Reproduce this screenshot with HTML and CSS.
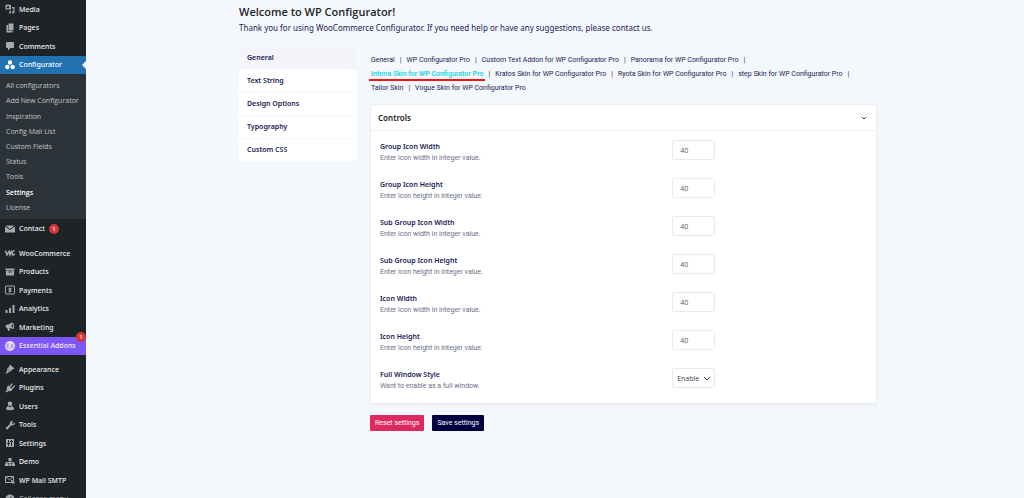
FILE: index.html
```
<!DOCTYPE html>
<html lang="en">
<head>
    <meta charset="UTF-8">
    <meta name="viewport" content="width=device-width, initial-scale=1.0">
    <title>WP Configurator Settings</title>
    <link rel="stylesheet" href="styles.css">
</head>
<body>
    <nav class="sidebar">
        <ul class="menu menu-top">
            <li><a href="#">
                <svg class="icon" viewBox="0 0 20 20"><path fill-rule="evenodd" d="M1 2h2l1-1h4l1 1h3v9H1zM6 4a2.500 2.500 0 1 0 0 5 2.500 2.500 0 0 0 0-5zM14 6h5v10.500a2.500 2.500 0 1 1-2-2.400V9h-3zM10 13h2v4a2 2 0 1 1-2-2z"/></svg>
                Media</a></li>
            <li><a href="#">
                <svg class="icon" viewBox="0 0 20 20"><path d="M7 1h10v14H7zM3 4h3v12h9v3H3z"/></svg>
                Pages</a></li>
            <li><a href="#">
                <svg class="icon" viewBox="0 0 20 20"><path d="M4 2h12a2 2 0 0 1 2 2v8a2 2 0 0 1-2 2h-5l-5 5v-5H4a2 2 0 0 1-2-2V4a2 2 0 0 1 2-2z"/></svg>
                Comments</a></li>
            <li><a href="#" class="current">
                <svg class="icon" viewBox="0 0 20 20"><circle cx="10" cy="5" r="4.400"/><circle cx="4.600" cy="14" r="4.400"/><circle cx="15.400" cy="14" r="4.400"/></svg>
                Configurator</a></li>
        </ul>
        <ul class="submenu">
            <li><a href="#">All configurators</a></li>
            <li><a href="#">Add New Configurator</a></li>
            <li><a href="#">Inspiration</a></li>
            <li><a href="#">Config Mail List</a></li>
            <li><a href="#">Custom Fields</a></li>
            <li><a href="#">Status</a></li>
            <li><a href="#">Tools</a></li>
            <li><a href="#" class="selected">Settings</a></li>
            <li><a href="#">License</a></li>
        </ul>
        <ul class="menu menu-contact">
            <li><a href="#">
                <svg class="icon" viewBox="0 0 20 20"><path d="M1 3h18l-9 7zM0 5l10 7 10-7v12H0z"/></svg>
                Contact <span class="count">1</span></a></li>
        </ul>
        <ul class="menu menu-shop">
            <li><a href="#">
                <svg class="icon" viewBox="0 0 20 20"><path d="M1 5l3 9 4-7 2 7 3-9M19 5c-5 0-6 9-3 9 2 0 3-2 3-3" fill="none" stroke="currentColor" stroke-width="3"/></svg>
                WooCommerce</a></li>
            <li><a href="#">
                <svg class="icon" viewBox="0 0 20 20"><path fill-rule="evenodd" d="M1 3h18v4H1zM2 8h16v9H2zM7 9v2h6V9z"/></svg>
                Products</a></li>
            <li><a href="#">
                <svg class="icon" viewBox="0 0 20 20"><rect x="1" y="2" width="18" height="16" rx="1" fill="none" stroke="currentColor" stroke-width="2"/><path d="M13 7H8v3h4v3H7M10 5v10" fill="none" stroke="currentColor" stroke-width="2"/></svg>
                Payments</a></li>
            <li><a href="#">
                <svg class="icon" viewBox="0 0 20 20"><path d="M1 12h4v6H1zM8 8h4v10H8zM15 2h4v16h-4z"/></svg>
                Analytics</a></li>
            <li><a href="#">
                <svg class="icon" viewBox="0 0 20 20"><path fill-rule="evenodd" d="M14 1c4 1 6 9 3 13-3 0-5-2-8-2l1 5-3 1-3-6c-3-1-4-4-2-6 5-1 8-3 12-5zM14 4c-2 2 0 7 2 8 1-3 0-7-2-8z"/></svg>
                Marketing</a></li>
            <li><a href="#" class="addons">
                <svg class="icon" viewBox="0 0 20 20"><circle cx="10" cy="10" r="10"/><path d="M9 6H4v8h5M4 10h4M11 15l3-9 3 9M12 12h4" fill="none" stroke="#7c57f5" stroke-width="1"/></svg>
                Essential Addons <span class="count count-corner">1</span></a></li>
        </ul>
        <ul class="menu menu-admin">
            <li><a href="#">
                <svg class="icon" viewBox="0 0 20 20"><path d="M10 1l9 8-4 2-4 4-7-6 4-3zM4 10l6 5-6 4-3-1 3-4z"/></svg>
                Appearance</a></li>
            <li><a href="#">
                <svg class="icon" viewBox="0 0 20 20"><path d="M7 5l8 8c-3 4-6 4-8 3l-4 3-2-2 3-4C3 10 4 7 7 5z"/><path d="M10 7l4-5M14 11l5-5" stroke="currentColor" stroke-width="2.500" stroke-linecap="round"/></svg>
                Plugins</a></li>
            <li><a href="#">
                <svg class="icon" viewBox="0 0 20 20"><circle cx="10" cy="5.500" r="4.500"/><path d="M7 10l3 3 3-3c3 1 5 3 5 7-5 2-11 2-16 0 0-4 2-6 5-7z"/></svg>
                Users</a></li>
            <li><a href="#">
                <svg class="icon" viewBox="0 0 20 20"><path d="M17.700 9.300c-1.400 1.300-3.300 1.700-5 1l-7 7.800c-.8.900-2.400 1-3.400 0-1-.8-.9-2.400.1-3.300l7.600-7c-.6-1.700-.2-3.600 1.100-5C12.600 1.300 15 .9 16.800 1.600l-3 3.400.5 2.200 2.300.5 3-3c.6 1.600.1 3.300-1.900 4.600z"/></svg>
                Tools</a></li>
            <li><a href="#">
                <svg class="icon" viewBox="0 0 20 20"><path fill-rule="evenodd" d="M2 2h16v16H2zM6 4v6H4v2h2v4h2v-4h2v-2H8V4zM12 4v2h-2v2h2v8h2V8h2V6h-2V4z"/></svg>
                Settings</a></li>
            <li><a href="#">
                <svg class="icon" viewBox="0 0 20 20"><path d="M7 2h6v6h-2v2h7v3h2v5h-6v-5h2v-1h-5v1h2v5H7v-5h2v-1H4v1h2v5H0v-5h2v-3h7V8H7z"/></svg>
                Demo</a></li>
            <li><a href="#">
                <svg class="icon" viewBox="0 0 20 20"><path d="M1 3h16v8h-4v4H1zM2 4l7 6 7-6" fill="none" stroke="currentColor" stroke-width="2"/><path d="M10 14h5v-3l5 4-5 4v-3h-5z"/></svg>
                WP Mail SMTP</a></li>
            <li><a href="#" class="collapse">
                <svg class="icon" viewBox="0 0 20 20"><path fill-rule="evenodd" d="M10 1a9 9 0 1 0 0 18 9 9 0 0 0 0-18zM13 5v10l-7-5z"/></svg>
                Collapse menu</a></li>
        </ul>
    </nav>

    <main class="content">
        <h1>Welcome to WP Configurator!</h1>
        <p class="intro">Thank you for using WooCommerce Configurator. If you need help or have any suggestions, please contact us.</p>

        <div class="settings">
            <nav class="tabs">
                <a href="#" class="active">General</a>
                <a href="#">Text String</a>
                <a href="#">Design Options</a>
                <a href="#">Typography</a>
                <a href="#">Custom CSS</a>
            </nav>

            <form class="panel">
                <ul class="sections">
                    <li><a href="#">General</a></li>
                    <li><a href="#">WP Configurator Pro</a></li>
                    <li><a href="#">Custom Text Addon for WP Configurator Pro</a></li>
                    <li><a href="#">Panorama for WP Configurator Pro</a></li>
                    <li><a href="#" class="active">Interia Skin for WP Configurator Pro</a></li>
                    <li><a href="#">Kratos Skin for WP Configurator Pro</a></li>
                    <li><a href="#">Ryota Skin for WP Configurator Pro</a></li>
                    <li><a href="#">step Skin for WP Configurator Pro</a></li>
                    <li><a href="#">Tailor Skin</a></li>
                    <li><a href="#">Vogue Skin for WP Configurator Pro</a></li>
                </ul>

                <section class="card">
                    <header class="card-header">
                        <h2>Controls</h2>
                        <button type="button" class="toggle" aria-label="Toggle controls">
                            <svg viewBox="0 0 8 8"><path d="M2 3l2 2 2-2"/></svg>
                        </button>
                    </header>
                    <div class="fields">
                        <div class="field">
                            <div class="field-text">
                                <label for="group-width">Group Icon Width</label>
                                <p>Enter icon width in integer value.</p>
                            </div>
                            <input type="text" id="group-width" value="40">
                        </div>
                        <div class="field">
                            <div class="field-text">
                                <label for="group-height">Group Icon Height</label>
                                <p>Enter icon height in integer value.</p>
                            </div>
                            <input type="text" id="group-height" value="40">
                        </div>
                        <div class="field">
                            <div class="field-text">
                                <label for="sub-width">Sub Group Icon Width</label>
                                <p>Enter icon width in integer value.</p>
                            </div>
                            <input type="text" id="sub-width" value="40">
                        </div>
                        <div class="field">
                            <div class="field-text">
                                <label for="sub-height">Sub Group Icon Height</label>
                                <p>Enter icon height in integer value.</p>
                            </div>
                            <input type="text" id="sub-height" value="40">
                        </div>
                        <div class="field">
                            <div class="field-text">
                                <label for="icon-width">Icon Width</label>
                                <p>Enter icon width in integer value.</p>
                            </div>
                            <input type="text" id="icon-width" value="40">
                        </div>
                        <div class="field">
                            <div class="field-text">
                                <label for="icon-height">Icon Height</label>
                                <p>Enter icon height in integer value.</p>
                            </div>
                            <input type="text" id="icon-height" value="40">
                        </div>
                        <div class="field">
                            <div class="field-text">
                                <label for="full-window">Full Window Style</label>
                                <p>Want to enable as a full window.</p>
                            </div>
                            <div class="select">
                                <select id="full-window">
                                    <option>Enable</option>
                                    <option>Disable</option>
                                </select>
                                <svg viewBox="0 0 8 8"><path d="M1 3l3 3 3-3"/></svg>
                            </div>
                        </div>
                    </div>
                </section>

                <div class="actions">
                    <button type="reset" class="btn btn-reset">Reset settings</button>
                    <button type="submit" class="btn btn-save">Save settings</button>
                </div>
            </form>
        </div>
    </main>
</body>
</html>
```
FILE: styles.css
```
* {
    box-sizing: border-box;
}

body {
    display: flex;
    height: 100vh;
    margin: 0;
    overflow: hidden;
    background: #f4f8fc;
    color: #1a1a55;
    font-family: "Open Sans", sans-serif;
    font-size: 7px;
}

h1, h2, p, ul {
    margin: 0;
    padding: 0;
}

ul {
    list-style: none;
}

a {
    color: inherit;
    text-decoration: none;
}

button, input, select {
    font: inherit;
}

h2, .intro, .menu, .tabs, .field label {
    font-family: "Noto Sans", sans-serif;
}

.sections, .field p, .btn {
    font-family: Roboto, sans-serif;
}

/* admin menu */
.sidebar {
    flex: 0 0 86px;
    overflow: hidden;
    background: #1d2327;
    color: #f0f0f1;
}

.menu, .submenu {
    display: grid;
    grid-auto-rows: 1fr;
}

.menu a {
    position: relative;
    display: flex;
    align-items: center;
    gap: 4px;
    height: 100%;
    padding-left: 5px;
    font-weight: 500;
    white-space: nowrap;
}

.menu-top {
    height: 74px;
}

.menu-contact {
    height: 19px;
}

.menu-shop {
    height: 111px;
    margin-top: 6px;
}

.menu-admin {
    height: 148px;
    margin-top: 5px;
}

.icon {
    flex: none;
    width: 10px;
    height: 10px;
    fill: currentColor;
    color: #a7aaad;
}

.menu .current {
    background: #2271b1;
    color: #fff;
}

.current .icon {
    color: #fff;
}

.current::after {
    content: "";
    position: absolute;
    right: 0;
    border: 4px solid transparent;
    border-right-color: #f4f8fc;
}

.menu .addons {
    background: #7c57f5;
    color: #f0f0f1;
}

.addons .icon {
    color: #e6ddfd;
}

.menu .collapse {
    color: #a7aaad;
}

.count {
    width: 10px;
    height: 10px;
    border-radius: 5px;
    background: #d63638;
    color: #fff;
    font-size: 6px;
    line-height: 10px;
    text-align: center;
}

.count-corner {
    position: absolute;
    top: -5px;
    right: 0;
}

.submenu {
    height: 145px;
    padding: 4px 0;
    background: #2c3338;
    color: #c3c4c7;
}

.submenu a {
    display: flex;
    align-items: center;
    height: 100%;
    padding-left: 6px;
    white-space: nowrap;
}

.submenu .selected {
    color: #fff;
    font-weight: 600;
}

/* settings page */
.content {
    flex: 1;
    padding: 4px 147px 0 153px;
}

h1 {
    color: #1d2327;
    font-size: 11px;
    font-weight: 600;
    line-height: 16px;
}

.intro {
    font-size: 8px;
    line-height: 15px;
}

.settings {
    display: flex;
    gap: 13px;
    margin-top: 12px;
}

.tabs {
    display: flex;
    flex: 0 0 118px;
    flex-direction: column;
    gap: 1px;
}

.tabs a {
    padding-left: 8px;
    background: #fff;
    font-weight: 600;
    line-height: 22px;
}

.tabs .active {
    background: #f4f5f9;
}

.panel {
    flex: 1;
}

.sections {
    display: flex;
    flex-wrap: wrap;
    padding: 6px 15px 0 1px;
}

.sections li {
    line-height: 14px;
    white-space: nowrap;
}

.sections li::after {
    content: "|";
    margin: 0 5px;
}

.sections li:last-child::after {
    content: none;
}

.sections .active {
    position: relative;
    color: #1fd3e6;
    font-weight: 600;
}

.sections .active::after {
    content: "";
    position: absolute;
    right: -2px;
    bottom: -3px;
    left: -2px;
    height: 2px;
    background: #f01414;
}

.card {
    margin-top: 9px;
    border: 1px solid #eceef4;
    border-radius: 3px;
    background: #fff;
    box-shadow: 0 1px 2px rgba(0, 0, 60, 0.05);
}

.card-header {
    display: flex;
    align-items: center;
    justify-content: space-between;
    height: 26px;
    padding: 0 8px 0 7px;
    border-bottom: 1px solid #eceef4;
}

h2 {
    color: #1d2327;
    font-size: 8px;
    font-weight: 600;
}

.toggle {
    display: flex;
    padding: 0;
    border: none;
    background: none;
    cursor: pointer;
}

.toggle svg, .select svg {
    width: 8px;
    height: 8px;
    fill: none;
    stroke: #3c434a;
    stroke-width: 1;
}

.fields {
    padding: 9px 9px 0;
}

.field {
    display: flex;
    height: 38px;
}

.field:last-child {
    height: 35px;
}

.field-text {
    flex: 0 0 60%;
    padding-top: 1px;
}

.field label {
    display: block;
    font-weight: 600;
    line-height: 12px;
}

.field p {
    color: #6c7086;
    line-height: 11px;
}

.field input, .select {
    width: 43px;
    height: 20px;
    border: 1px solid #e9eaef;
    border-radius: 2px;
    background: #fff;
    color: #50575e;
}

.field input {
    padding: 0 7px;
}

.select {
    position: relative;
}

.select select {
    width: 100%;
    height: 100%;
    padding: 0 4px;
    border: none;
    background: none;
    color: #3c434a;
    appearance: none;
}

.select svg {
    position: absolute;
    top: 5px;
    right: 3px;
    pointer-events: none;
}

.actions {
    display: flex;
    gap: 8px;
    margin-top: 11px;
}

.btn {
    height: 16px;
    padding: 0 5px;
    border: none;
    border-radius: 1px;
    color: #fff;
    cursor: pointer;
}

.btn-reset {
    background: #dc2a5e;
}

.btn-save {
    background: #000040;
}
```
